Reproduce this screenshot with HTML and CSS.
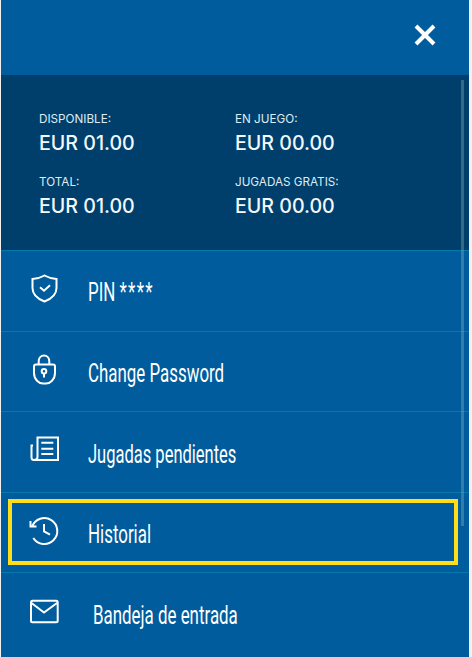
FILE: index.html

```html
<!DOCTYPE html>
<html lang="en">
<head>
    <meta charset="UTF-8">
    <meta name="viewport" content="width=device-width, initial-scale=1.0">
    <title>Menu</title>
    <link rel="stylesheet" href="styles.css">
</head>
<body>
    <div class="panel">
        <header class="top-bar">
            <button class="close-btn" aria-label="Close">
                <svg width="22" height="22" viewBox="0 0 22 22"><path d="M2 2 L20 20 M20 2 L2 20" fill="none" stroke="#fff" stroke-width="4"/></svg>
            </button>
        </header>

        <div class="scroll-thumb"></div>

        <section class="balance">
            <div class="balance-item">
                <span class="balance-label">DISPONIBLE:</span>
                <span class="balance-value">EUR 01.00</span>
            </div>
            <div class="balance-item">
                <span class="balance-label">EN JUEGO:</span>
                <span class="balance-value">EUR 00.00</span>
            </div>
            <div class="balance-item">
                <span class="balance-label">TOTAL:</span>
                <span class="balance-value">EUR 01.00</span>
            </div>
            <div class="balance-item">
                <span class="balance-label">JUGADAS GRATIS:</span>
                <span class="balance-value">EUR 00.00</span>
            </div>
        </section>

        <ul class="menu">
            <li class="menu-row">
                <a href="#" class="menu-link">
                    <svg class="menu-icon" width="30" height="30" viewBox="0 0 30 30"><path d="M16.5 2.5 C20 4.5 24 5.8 28.5 6 V15 C28.5 21.5 23 26 16.5 28.5 C10 26 4.5 21.5 4.5 15 V6 C9 5.8 13 4.5 16.5 2.5 Z M12 14.3 L16 17.7 L22 12.3"/></svg>
                    <span class="menu-text">PIN <span class="pin-stars">****</span></span>
                </a>
            </li>
            <li class="menu-row">
                <a href="#" class="menu-link">
                    <svg class="menu-icon" width="30" height="30" viewBox="0 0 30 30"><path d="M8 10.5 H25 C26.2 10.5 27 11.3 27 12.5 V19 C27 25.5 22 29.5 18 29.5 H15 C11 29.5 6 25.5 6 19 V12.5 C6 11.3 6.8 10.5 8 10.5 Z M10.7 10.5 V7.5 C10.7 4 13 1.5 16 1.5 C19 1.5 21.3 4 21.3 7.5 V10.5 M16 19.5 V23.5"/><circle cx="16" cy="17.3" r="2.3"/></svg>
                    <span class="menu-text">Change Password</span>
                </a>
            </li>
            <li class="menu-row">
                <a href="#" class="menu-link">
                    <svg class="menu-icon" width="30" height="30" viewBox="0 0 30 30"><path d="M5 11.5 H3.5 V23.5 C3.5 25 4.5 26 6 26 H30 V3.5 H9.5 V23 C9.5 25 8 26 6 26 M13.3 8.7 H25.3 M13.3 14.7 H25.3 M13.3 20 H25.3"/></svg>
                    <span class="menu-text jugadas-label">Jugadas pendientes</span>
                </a>
            </li>
            <li class="menu-row">
                <a href="#" class="menu-link is-focused">
                    <svg class="menu-icon" width="30" height="30" viewBox="0 0 30 30"><path d="M2.5 6 V11.5 H8.5 M4.1 11.5 A13 13 0 1 1 5.3 23 M16 9 V16.3 L22 19.7"/></svg>
                    <span class="menu-text">Historial</span>
                </a>
            </li>
            <li class="menu-row">
                <a href="#" class="menu-link">
                    <svg class="menu-icon" width="30" height="30" viewBox="0 0 30 30"><path d="M4.5 4.8 H28.2 C29.2 4.8 29.7 5.3 29.7 6.3 V24.7 C29.7 25.7 29.2 26.2 28.2 26.2 H4.5 C3.5 26.2 3 25.7 3 24.7 V6.3 C3 5.3 3.5 4.8 4.5 4.8 Z M3.5 7 L16 16.5 L29 7"/></svg>
                    <span class="menu-text inbox-label">Bandeja de entrada</span>
                </a>
            </li>
        </ul>
    </div>
</body>
</html>
```

FILE: styles.css

```css
:root {
    --panel-blue: #005c9c;
    --dark-blue: #003f6c;
    --line-blue: #0479ab;
    --yellow: #ffdd1a;
}

* {
    box-sizing: border-box;
}

html, body {
    height: 100%;
}

body {
    margin: 0;
    background: #f1f1f1;
    font-family: Inter, Roboto, sans-serif;
    color: #fff;
    overflow: hidden;
}

.panel {
    position: relative;
    width: 468px;
    height: 657px;
    margin-left: 1px;
    background: var(--panel-blue);
}

/* Top bar */
.top-bar {
    height: 75px;
    display: flex;
    justify-content: flex-end;
    padding: 24px 33px 0 0;
}

.close-btn {
    width: 22px;
    height: 22px;
    padding: 0;
    border: 0;
    background: none;
    cursor: pointer;
}

.scroll-thumb {
    position: absolute;
    top: 80px;
    left: 460px;
    width: 3px;
    height: 446px;
    background: rgba(140, 190, 190, 0.35);
}

/* Balance block */
.balance {
    height: 175px;
    padding: 37px 0 0 38px;
    display: grid;
    grid-template-columns: 196px 1fr;
    grid-auto-rows: 63px;
    background: var(--dark-blue);
}

.balance-item {
    display: flex;
    flex-direction: column;
}

.balance-label {
    font-size: 11.7px;
    line-height: 14px;
    color: #dcecf3;
}

.balance-value {
    margin-top: 5px;
    font-size: 19.6px;
    font-weight: 500;
    line-height: 24px;
    color: #f2f8fb;
}

/* Menu */
.menu {
    margin: 0;
    padding: 0;
    list-style: none;
}

.menu-row {
    height: 80.6px;
    border-top: 1px solid var(--line-blue);
    padding: 6px 11px 7px 7px;
}

.menu-link {
    height: 100%;
    display: flex;
    align-items: center;
    gap: 30px;
    padding-left: 16px;
    border: 4px solid transparent;
    color: #fff;
    text-decoration: none;
}

.menu-link.is-focused {
    border-color: var(--yellow);
}

.menu-icon {
    flex: none;
    margin-top: -4px;
    overflow: visible;
    fill: none;
    stroke: #fff;
    stroke-width: 2;
}

/* no condensed family installed, so squeeze the text */
.menu-text {
    font-family: Roboto, sans-serif;
    font-size: 26px;
    transform: scaleX(0.65);
    transform-origin: left center;
    white-space: nowrap;
    margin-top: 4px;
}

.pin-stars {
    letter-spacing: 2px;
}

.jugadas-label {
    margin-top: 6px;
    transform: scaleX(0.635);
}

.inbox-label {
    margin-left: 5px;
}
```
